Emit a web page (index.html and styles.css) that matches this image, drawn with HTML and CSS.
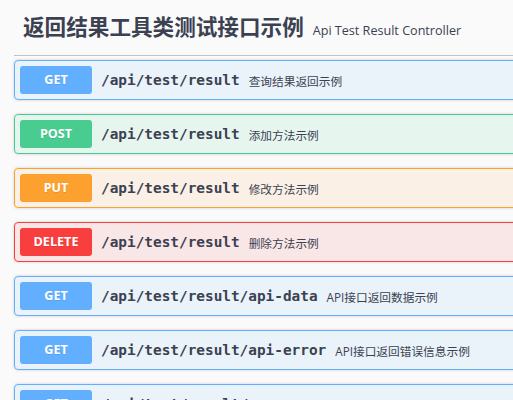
FILE: index.html
```html
<!DOCTYPE html>
<html lang="en">
<head>
    <meta charset="UTF-8">
    <meta name="viewport" content="width=device-width, initial-scale=1.0">
    <title>Api Test Result Controller</title>
    <link rel="stylesheet" href="styles.css">
</head>
<body>
    <div class="wrapper">
        <h4 class="tag">
            <span class="tag-name">返回结果工具类测试接口示例</span>
            <small class="tag-desc">Api Test Result Controller</small>
        </h4>

        <div class="opblock get">
            <span class="method">GET</span>
            <span class="path">/api/test/result</span>
            <span class="desc">查询结果返回示例</span>
        </div>
        <div class="opblock post">
            <span class="method">POST</span>
            <span class="path">/api/test/result</span>
            <span class="desc">添加方法示例</span>
        </div>
        <div class="opblock put">
            <span class="method">PUT</span>
            <span class="path">/api/test/result</span>
            <span class="desc">修改方法示例</span>
        </div>
        <div class="opblock delete">
            <span class="method">DELETE</span>
            <span class="path">/api/test/result</span>
            <span class="desc">删除方法示例</span>
        </div>
        <div class="opblock get">
            <span class="method">GET</span>
            <span class="path">/api/test/result/api-data</span>
            <span class="desc">API接口返回数据示例</span>
        </div>
        <div class="opblock get">
            <span class="method">GET</span>
            <span class="path">/api/test/result/api-error</span>
            <span class="desc">API接口返回错误信息示例</span>
        </div>
        <div class="opblock get">
            <span class="method">GET</span>
            <span class="path">/api/test/result/page</span>
            <span class="desc">分页返回数据示例</span>
        </div>
    </div>
</body>
</html>
```

FILE: styles.css
```css
body {
    margin: 0;
    background: #fafafa;
    color: #3b4151;
    font-family: "Open Sans", "Noto Sans CJK SC", sans-serif;
    overflow: hidden;
}
.wrapper {
    width: 560px;
    padding: 2px 0 0 14px;
}
.tag {
    display: flex;
    align-items: baseline;
    margin: 0 0 4px;
    padding: 9px 18px 9px 9px;
    border-bottom: 1px solid rgba(59, 65, 81, 0.3);
    line-height: 30px;
}
.tag-name {
    font-size: 21.6px;
    font-weight: 700;
    font-family: "Noto Sans CJK SC", sans-serif;
}
.tag-desc {
    margin-left: 9px;
    font-size: 12.6px;
    font-weight: 400;
}
.opblock {
    display: flex;
    align-items: center;
    margin-bottom: 14px;
    padding: 5px;
    border: 1px solid #61affe;
    border-radius: 4px;
    box-shadow: 0 0 3px rgba(0, 0, 0, 0.19);
}
.method {
    width: 72px;
    height: 28px;
    line-height: 28px;
    text-align: center;
    border-radius: 3px;
    color: #fff;
    font-size: 12.6px;
    font-weight: 700;
    text-shadow: 0 1px 0 rgba(0, 0, 0, 0.1);
}
.path {
    padding: 0 9px;
    font-family: "DejaVu Sans Mono", monospace;
    font-size: 14.4px;
    font-weight: 700;
}
.desc {
    font-size: 11.7px;
    font-family: "Open Sans", "Noto Sans CJK SC", sans-serif;
}
.get {
    background: rgba(97, 175, 254, 0.1);
    border-color: #61affe;
}
.get .method {
    background: #61affe;
}
.post {
    background: rgba(73, 204, 144, 0.1);
    border-color: #49cc90;
}
.post .method {
    background: #49cc90;
}
.put {
    background: rgba(252, 161, 48, 0.1);
    border-color: #fca130;
}
.put .method {
    background: #fca130;
}
.delete {
    background: rgba(249, 62, 62, 0.1);
    border-color: #f93e3e;
}
.delete .method {
    background: #f93e3e;
}
```
